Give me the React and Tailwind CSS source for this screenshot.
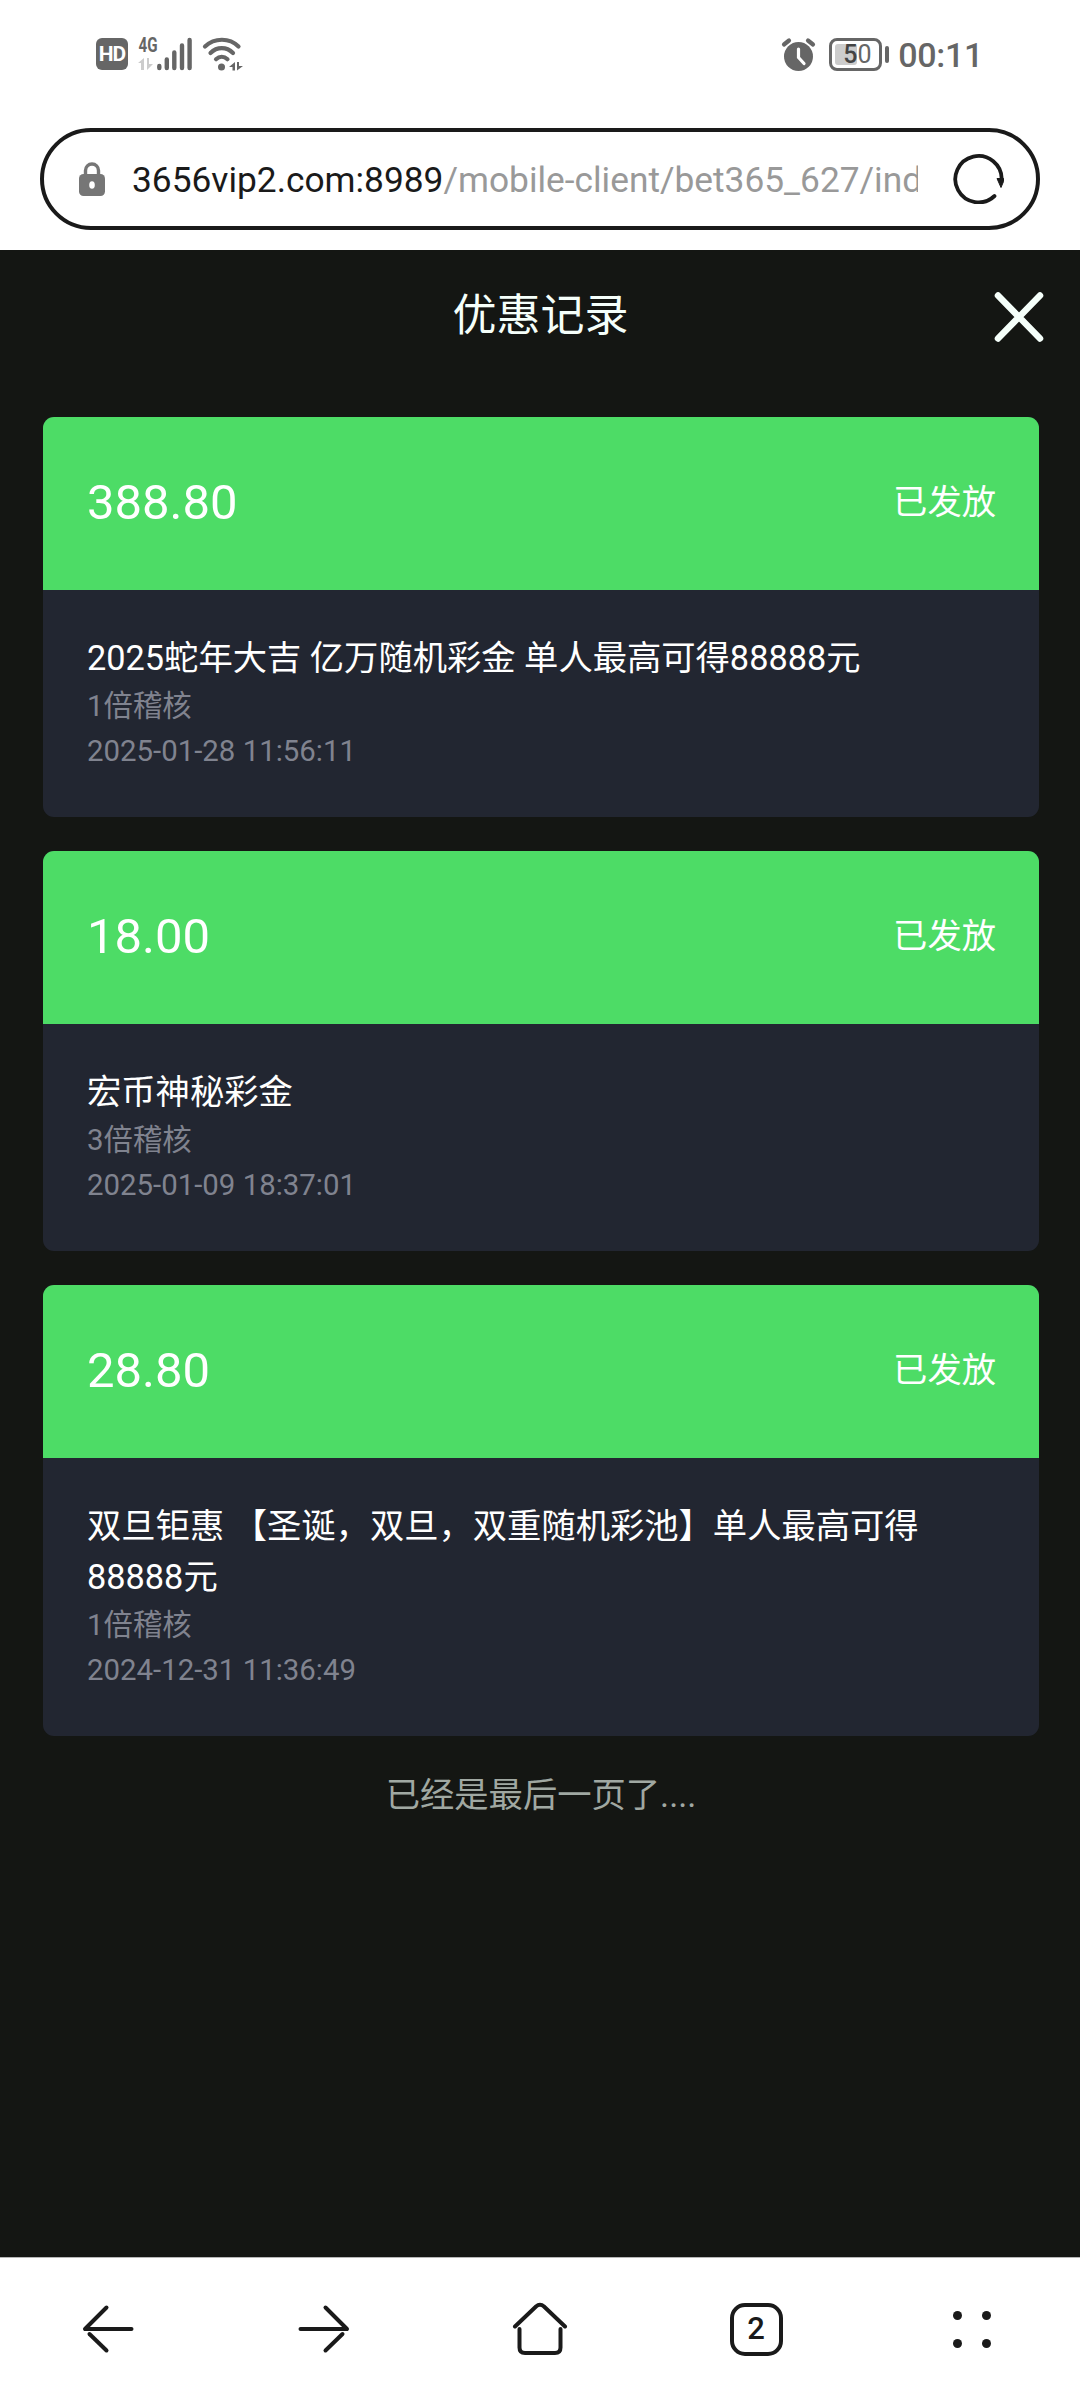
const records = [
  { amount: "388.80", status: "已发放", title: "2025蛇年大吉 亿万随机彩金 单人最高可得88888元", audit: "1倍稽核", time: "2025-01-28 11:56:11" },
  { amount: "18.00", status: "已发放", title: "宏币神秘彩金", audit: "3倍稽核", time: "2025-01-09 18:37:01" },
  { amount: "28.80", status: "已发放", title: "双旦钜惠 【圣诞，双旦，双重随机彩池】单人最高可得88888元", audit: "1倍稽核", time: "2024-12-31 11:36:49" },
];

function SignalIcon() {
  return (
    <svg width="56" height="36" viewBox="0 0 56 36" fill="#666">
      <text x="0.5" y="16" fontSize="21" fontWeight="700" textLength="19" lengthAdjust="spacingAndGlyphs">4G</text>
      <path d="M6 22v12H3v-7H0zM9 34V22h2v6h4z" fill="#ccc" />
      <path d="M21.3 30v2M28.8 23.5v8.5M36.3 16.5v15.5M44 9.5v22.5M51.6 4v28" stroke="#666" strokeWidth="4.4" strokeLinecap="round" />
    </svg>
  );
}

function WifiIcon() {
  return (
    <svg width="42" height="36" viewBox="0 0 42 36" fill="none" stroke="#666" strokeWidth="4.2" strokeLinecap="round">
      <path d="M3 10.5C12.5 1.500 27.5 1.500 36.5 10.5M8.5 17C15 10.5 24.5 10.5 31 17M14 23.2C17.5 20 22 20 25.5 23.2" />
      <circle cx="19.5" cy="31" r="3.5" fill="#666" stroke="none" />
      <path d="M33 26v8.5h-2.5V31H27zM35 34.5V26h2v4h4z" fill="#666" stroke="none" />
    </svg>
  );
}

function AlarmIcon() {
  return (
    <svg width="36" height="36" viewBox="0 0 36 36" fill="none" strokeLinecap="round">
      <circle cx="17.5" cy="19.5" r="14.5" fill="#666" />
      <path d="M3 7.5L8 3.5M32 7.5L27 3.5" stroke="#666" strokeWidth="4.2" />
      <path d="M17.5 12v8.5l5.5 6" stroke="#fff" strokeWidth="3.2" />
    </svg>
  );
}

function StatusBar() {
  return (
    <div className="flex h-[128px] items-start justify-between pt-[36px] pr-[97px] pl-[96px] text-[#666]">
      <div className="flex items-center">
        <div className="flex h-8 w-8 items-center justify-center rounded-[6px] bg-[#666] text-[21px] leading-none font-bold tracking-[-1px] text-white">HD</div>
        <div className="ml-[10px]">
          <SignalIcon />
        </div>
        <div className="ml-[8px]">
          <WifiIcon />
        </div>
      </div>
      <div className="flex items-center">
        <AlarmIcon />
        <div className="ml-[12px] flex h-[33px] w-[53px] items-center rounded-[8px] border-3 border-[#666] pl-[3px]">
          <div className="flex h-[21px] w-[22px] items-center rounded-[3px] bg-[#ccc] pl-[8px] text-[25px] leading-none">
            <span className="font-medium text-[#444]">5</span>
            <span>0</span>
          </div>
        </div>
        <div className="ml-[3px] h-[17px] w-[4px] rounded-full bg-[#666]" />
        <div className="ml-[9px] pt-px text-[34px] leading-[36px] font-medium tracking-[-0.3px]">00:11</div>
      </div>
    </div>
  );
}

function AddressBar() {
  return (
    <div className="mx-10 flex h-[102px] items-center rounded-full border-4 border-[#1a1a1a] pr-[31px] pl-[34px]">
      <svg className="shrink-0" width="28" height="36" viewBox="0 0 28 36" fill="none">
        <path d="M7.5 15V9.500a6.500 6.500 0 0 1 13 0V15" stroke="#767676" strokeWidth="3.4" />
        <rect x="1" y="13" width="26" height="22" rx="4.5" fill="#767676" />
        <ellipse cx="14" cy="24" rx="2.8" ry="3.8" fill="#fff" />
      </svg>
      <div className="ml-[26px] w-[786px] shrink-0 overflow-hidden pt-[3px] text-[35.3px] whitespace-nowrap text-[#999]">
        <span className="text-[#1a1a1a]">3656vip2.com:8989</span>/mobile-client/bet365_627/ind
      </div>
      <svg className="mb-[3px] ml-auto shrink-0" width="52" height="52" viewBox="0 0 52 52" fill="none">
        <path d="M41.5 44A23.200 23.200 0 1 1 48.7 28" stroke="#1a1a1a" strokeWidth="3.8" strokeLinecap="round" />
        <path d="M44 26.5h6.5v3L48 35.5z" fill="#1a1a1a" stroke="#1a1a1a" strokeLinejoin="round" />
      </svg>
    </div>
  );
}

function RecordCard({ record }) {
  return (
    <article className="overflow-hidden rounded-[11px] bg-[#222631]">
      <div className="flex h-[173px] items-center justify-between bg-[#4ddc66] pr-[43px] pb-[2px] pl-[44px] text-white">
        <span className="text-[49px] leading-none">{record.amount}</span>
        <span className="text-[34.3px]">{record.status}</span>
      </div>
      <div className="px-[44px] pt-[43px] pb-[44px]">
        <h2 className="text-[34.3px] leading-[51px] text-white">{record.title}</h2>
        <p className="text-[29.4px] leading-[44.5px] text-[#80838f]">{record.audit}</p>
        <p className="text-[29.4px] leading-[44.5px] text-[#80838f]">{record.time}</p>
      </div>
    </article>
  );
}

function BottomNav() {
  return (
    <nav className="grid h-[143px] grid-cols-5 items-center justify-items-center border-t border-[#b5b5b5] bg-white">
      <svg width="54" height="54" viewBox="0 0 54 54" fill="none" stroke="#1a1a1a" strokeWidth="4" strokeLinecap="round">
        <path d="M25.5 5.5L4 27h46.5" strokeLinejoin="round" />
        <path d="M8.5 32L25.5 48.5" />
      </svg>
      <svg width="54" height="54" viewBox="0 0 54 54" fill="none" stroke="#1a1a1a" strokeWidth="4" strokeLinecap="round">
        <path d="M28.5 5.5L50 27H3.5" strokeLinejoin="round" />
        <path d="M45.5 32L28.5 48.5" />
      </svg>
      <svg width="56" height="54" viewBox="0 0 56 54" fill="none" stroke="#1a1a1a" strokeWidth="4" strokeLinecap="round">
        <path d="M3 24.5L24 4.500q4-3.500 8 0L53 24.5" />
        <path d="M7.5 27v18.500q0 5.500 5.500 5.500h30q5.500 0 5.500-5.500V27" />
      </svg>
      <div className="flex h-[53px] w-[53px] items-center justify-center rounded-[15px] border-4 border-[#1a1a1a] pb-px text-[31px] leading-none font-medium text-[#1a1a1a]">2</div>
      <div className="grid grid-cols-2 gap-x-[20px] gap-y-[19px]">
        {[0, 1, 2, 3].map((i) => (
          <span key={i} className="h-[9px] w-[9px] rounded-full bg-[#1a1a1a]" />
        ))}
      </div>
    </nav>
  );
}

export default function App() {
  return (
    <div className="flex h-[2400px] w-[1080px] flex-col bg-white font-[Roboto,'Noto_Sans_CJK_SC',sans-serif]">
      <StatusBar />
      <AddressBar />
      <main className="mt-5 flex flex-1 flex-col bg-[#141613]">
        <header className="grid h-[131px] grid-cols-[1fr_auto_1fr] items-center pl-px text-[#f5fffa]">
          <h1 className="col-start-2 text-[44px]">优惠记录</h1>
          <svg className="mt-[3px] mr-[35px] justify-self-end" width="52" height="52" viewBox="0 0 52 52" stroke="#f5fffa" strokeWidth="6.5" strokeLinecap="round">
            <path d="M5 4.500l42 43M47 4.500l-42 43" />
          </svg>
        </header>
        <div className="flex flex-col gap-[34px] pt-[36px] pr-[41px] pl-[43px]">
          {records.map((r) => (
            <RecordCard key={r.time} record={r} />
          ))}
        </div>
        <p className="mt-[34px] pl-[2px] text-center text-[34.3px] text-[#a0a8a2]">已经是最后一页了....</p>
      </main>
      <BottomNav />
    </div>
  );
}
